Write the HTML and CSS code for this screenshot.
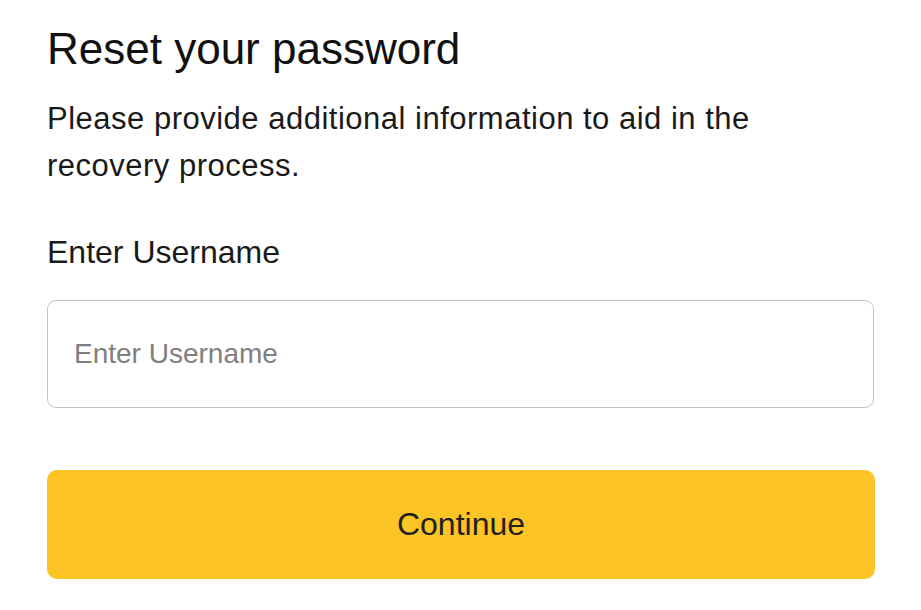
FILE: index.html
```html
<!DOCTYPE html>
<html lang="en">
<head>
    <meta charset="UTF-8">
    <meta name="viewport" content="width=device-width, initial-scale=1.0">
    <title>Reset your password</title>
    <link rel="stylesheet" href="styles.css">
</head>
<body>
    <div class="reset-page">
        <h1 class="reset-title">Reset your password</h1>
        <p class="reset-text">Please provide additional information to aid in the recovery process.</p>
        <form class="reset-form">
            <label class="field-label" for="username">Enter Username</label>
            <input class="field-input" type="text" id="username" placeholder="Enter Username">
            <button class="continue-btn" type="button">Continue</button>
        </form>
    </div>
</body>
</html>
```

FILE: styles.css
```css
body {
    margin: 0;
    background-color: #fff;
    font-family: "Liberation Sans", Arial, sans-serif;
    color: #111;
}

.reset-page {
    padding: 22px 47px 0 47px;
}

.reset-title {
    margin: 0;
    font-size: 44px;
    font-weight: normal;
    line-height: 54px;
}

.reset-text {
    margin: 19px 0 0 0;
    max-width: 740px;
    font-size: 31px;
    line-height: 47px;
    letter-spacing: 0.5px;
    color: #1a1a1a;
}

.reset-form {
    display: flex;
    flex-direction: column;
}

.field-label {
    margin-top: 43px;
    font-size: 32px;
    line-height: 40px;
    color: #1a1a1a;
}

.field-input {
    margin-top: 28px;
    height: 108px;
    box-sizing: border-box;
    padding: 0 26px;
    border: 1px solid #c4c4c4;
    border-radius: 9px;
    font-family: "Liberation Sans", Arial, sans-serif;
    font-size: 28px;
    color: #222;
}

.field-input::placeholder {
    color: #808080;
}

.continue-btn {
    margin-top: 62px;
    width: 828px;
    height: 109px;
    border: none;
    border-radius: 10px;
    background-color: #fdc425;
    font-family: "Liberation Sans", Arial, sans-serif;
    font-size: 32px;
    color: #222;
    cursor: pointer;
}
```
